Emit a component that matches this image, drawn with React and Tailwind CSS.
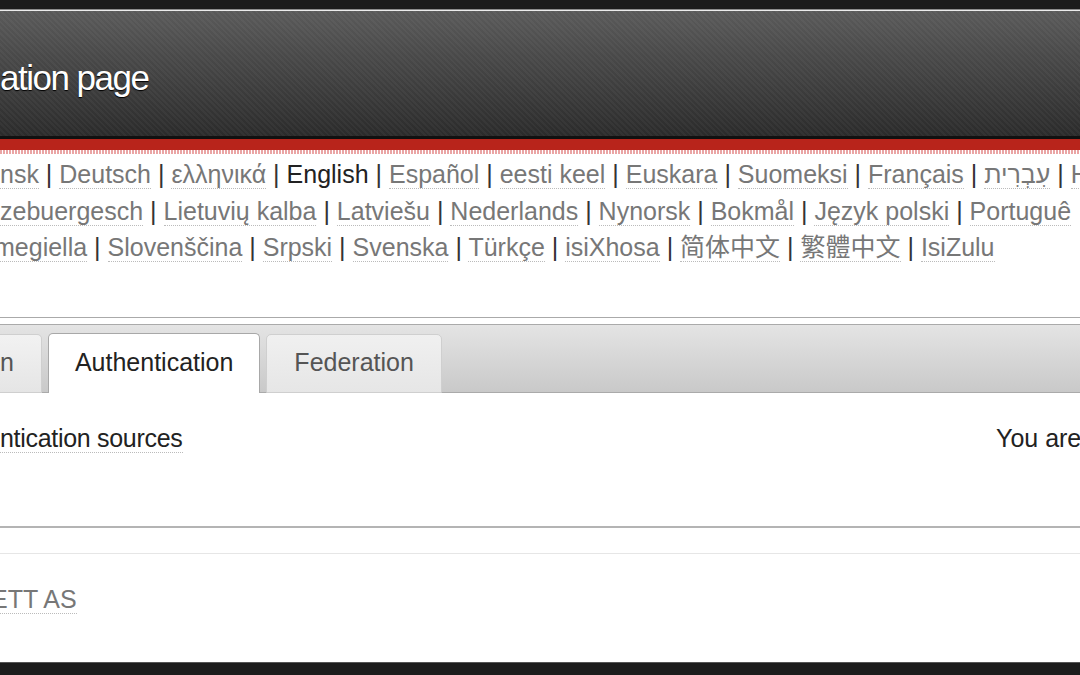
import React from "react";

const rows = [
  { shift: "", items: ["nsk", "Deutsch", "ελληνικά", "English", "Español", "eesti keel", "Euskara", "Suomeksi", "Français", "עִבְרִית", "H"] },
  { shift: "", items: ["zebuergesch", "Lietuvių kalba", "Latviešu", "Nederlands", "Nynorsk", "Bokmål", "Język polski", "Portuguê"] },
  { shift: "-ml-[6px]", items: ["megiella", "Slovenščina", "Srpski", "Svenska", "Türkçe", "isiXhosa", "简体中文", "繁體中文", "IsiZulu"] },
];

const LangRow = ({ items, shift }) => (
  <div className="overflow-hidden whitespace-nowrap">
    <div className={shift}>
      {items.map((lang, i) => (
        <span key={lang}>
          {i > 0 && <span className="text-[#333]">{" | "}</span>}
          {lang === "English" ? (
            <span className="text-[#222]">{lang}</span>
          ) : (
            <a className="border-b border-dotted border-[#bbb] text-[#777]">{lang}</a>
          )}
        </span>
      ))}
    </div>
  </div>
);

const App = () => {
  return (
    <div className="flex h-[675px] w-[1080px] flex-col overflow-hidden bg-white font-['Liberation_Sans','Noto_Sans_CJK_SC',sans-serif] text-[25px]">
      {/* top strip */}
      <div className="h-[9px] shrink-0 bg-[#1c1c1c]" />
      <div className="h-px shrink-0 bg-[#8c8c8c]" />
      <div className="h-px shrink-0 bg-[#ececec]" />

      {/* header */}
      <div className="h-[125px] shrink-0 bg-[image:repeating-linear-gradient(45deg,rgba(255,255,255,0.035)_0_2px,transparent_2px_4px),linear-gradient(to_bottom,#5a5a5a,#2b2b2b)] pt-[47px]">
        <h1 className="text-[35px] leading-[40px] tracking-[-1.5px] text-white [text-shadow:0_1px_1px_#000]">
          ation page
        </h1>
      </div>
      <div className="h-[3px] shrink-0 bg-[#111]" />
      <div className="h-[11px] shrink-0 bg-[#b8241b]" />
      <div className="h-[4px] shrink-0 bg-[image:repeating-linear-gradient(90deg,#eaa5a5_0_2px,#fff_2px_3px)]" />

      {/* languages */}
      <div className="shrink-0 pt-[2px] leading-[36.5px]">
        {rows.map((r) => (
          <LangRow key={r.items[0]} items={r.items} shift={r.shift} />
        ))}
      </div>

      <div className="mt-[51px] h-px shrink-0 bg-[#aaa]" />

      {/* tabs */}
      <div className="mt-[6px] flex h-[69px] shrink-0 items-end gap-[6px] border-y border-[#aaa] bg-[linear-gradient(to_bottom,#e4e4e4,#c9c9c9)] pt-[8px]">
        <div className="-mb-px flex h-[59px] items-center rounded-tr-[5px] border border-l-0 border-[#cfcfcf] bg-[linear-gradient(to_bottom,#f2f2f2,#e5e5e5)] pr-[27px] text-[#555]">
          n
        </div>
        <div className="-mb-px flex h-[60px] items-center rounded-t-[5px] border border-b-0 border-[#a8a8a8] bg-white px-[26px] text-[#222]">
          Authentication
        </div>
        <div className="-mb-px flex h-[59px] items-center rounded-t-[5px] border border-[#cfcfcf] bg-[linear-gradient(to_bottom,#f0f0f0,#e6e6e6)] px-[27px] text-[#555]">
          Federation
        </div>
      </div>

      {/* content */}
      <div className="grid shrink-0 grid-cols-[996px_1fr] pt-[27px] pb-[69px] leading-[37px] text-[#222]">
        <div>
          <a className="border-b border-dotted border-[#bbb] tracking-[-0.3px]">ntication sources</a>
        </div>
        <div className="overflow-hidden whitespace-nowrap">You are</div>
      </div>

      <div className="h-[2px] shrink-0 bg-[#b4b4b4]" />
      <div className="mt-[25px] h-px shrink-0 bg-[#e6e6e6]" />

      {/* footer */}
      <div className="flex-1 overflow-hidden pt-[27px] leading-[37px]">
        <a className="-ml-[9px] border-b border-dotted border-[#bbb] text-[#777]">ETT AS</a>
      </div>

      <div className="h-px shrink-0 bg-[#555]" />
      <div className="h-[12px] shrink-0 bg-[#1c1c1c]" />
    </div>
  );
};

export default App;
